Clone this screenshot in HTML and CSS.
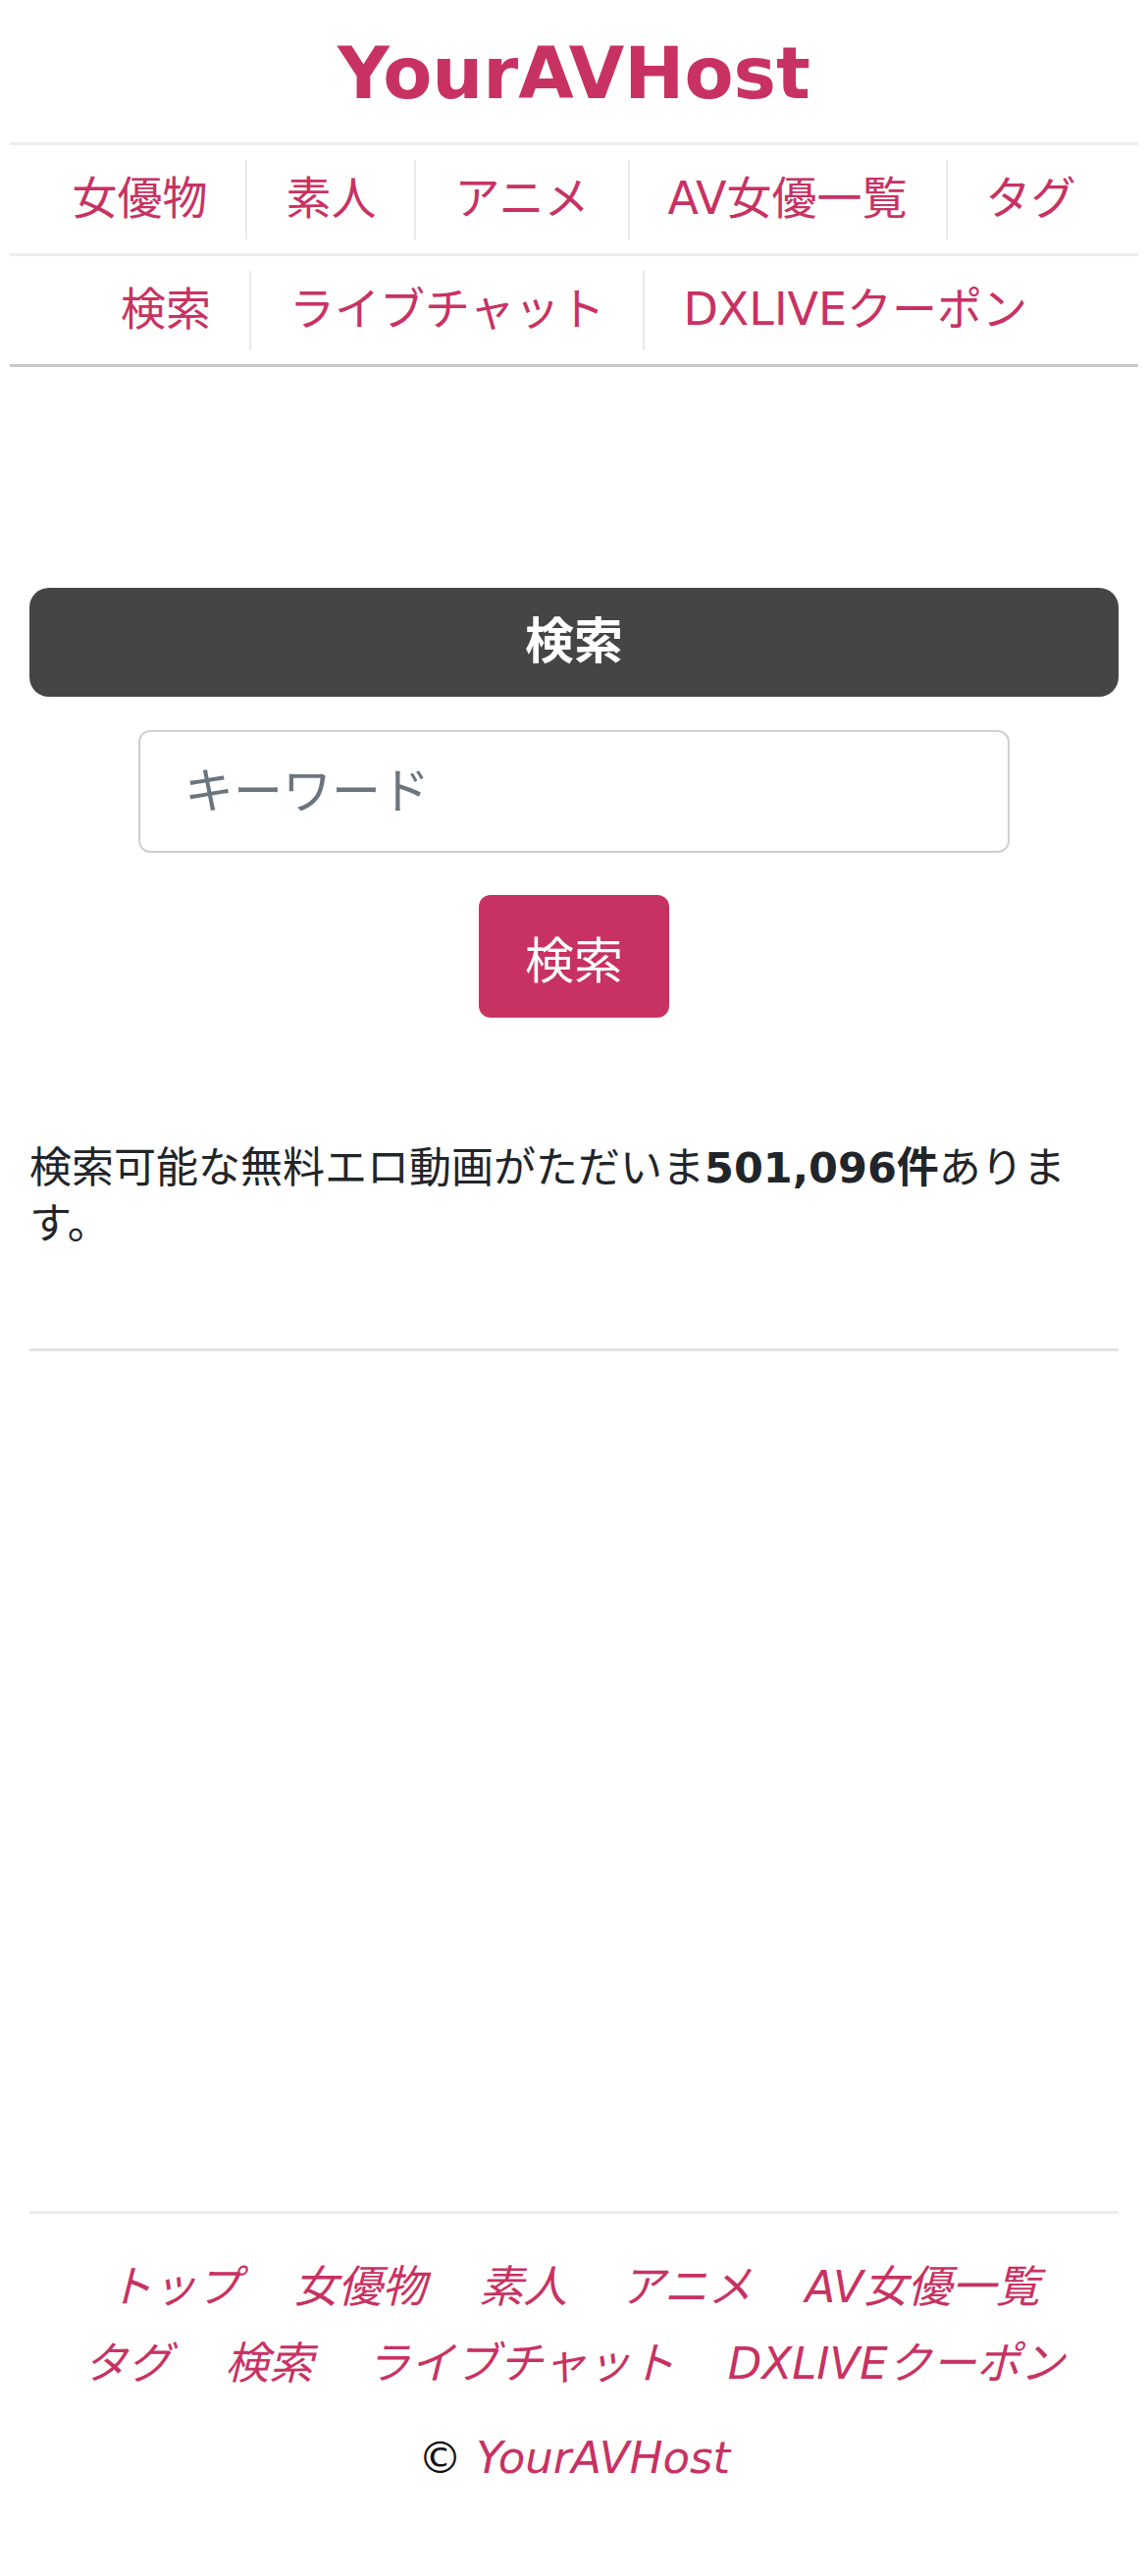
FILE: index.html
```
<!DOCTYPE html>
<html lang="ja">
  <head>
    <meta charset="UTF-8" />
    <title>検索 | YourAVHost</title>
    <link rel="stylesheet" href="styles.css">
  </head>
  <body>
    <header class="site-header">
      <h1 class="logo"><a href="#">YourAVHost</a></h1>
      <nav class="global-nav">
        <ul class="nav-row">
          <li><a href="#">女優物</a></li>
          <li><a href="#">素人</a></li>
          <li><a href="#">アニメ</a></li>
          <li><a href="#">AV女優一覧</a></li>
          <li><a href="#">タグ</a></li>
        </ul>
        <ul class="nav-row">
          <li><a href="#">検索</a></li>
          <li><a href="#">ライブチャット</a></li>
          <li><a href="#">DXLIVEクーポン</a></li>
        </ul>
      </nav>
    </header>

    <main class="content">
      <h2 class="section-title">検索</h2>
      <form class="search-form">
        <input class="search-input" type="text" placeholder="キーワード">
        <button class="search-btn" type="submit">検索</button>
      </form>
      <p class="count">検索可能な無料エロ動画がただいま<strong>501,096件</strong>あります。</p>
      <hr class="divider">
    </main>

    <footer class="site-footer">
      <ul class="footer-links">
        <li><a href="#">トップ</a></li>
        <li><a href="#">女優物</a></li>
        <li><a href="#">素人</a></li>
        <li><a href="#">アニメ</a></li>
        <li><a href="#">AV女優一覧</a></li>
        <li><a href="#">タグ</a></li>
        <li><a href="#">検索</a></li>
        <li><a href="#">ライブチャット</a></li>
        <li><a href="#">DXLIVEクーポン</a></li>
      </ul>
      <p class="copyright">© <a href="#">YourAVHost</a></p>
    </footer>
  </body>
</html>
```

FILE: styles.css
```
/* base */
html, body {
  margin: 0;
  padding: 0;
  background: #fff;
  color: #212529;
  font-family: "DejaVu Sans", "Noto Sans CJK JP", sans-serif;
  font-size: 43px;
}

a {
  color: #c83263;
  text-decoration: none;
}

ul {
  list-style: none;
  margin: 0;
  padding: 0;
}

/* header */
.site-header {
  padding: 0 10px;
}

.logo {
  margin: 33px 0 28px;
  font-size: 73px;
  line-height: 84px;
  text-align: center;
}

.global-nav {
  border-bottom: 3px solid #c8c8c8;
}

.nav-row {
  display: flex;
  justify-content: center;
  padding: 15px 0 14px;
  border-top: 3px solid #eee;
}

.nav-row li {
  height: 81px;
  line-height: 79px;
  padding: 0 39px;
  font-size: 46px;
  white-space: nowrap;
}

.nav-row li + li {
  border-left: 2px solid #e9e9e9;
}

/* main */
.content {
  padding: 225px 30px 0;
}

.section-title {
  margin: 0;
  height: 111px;
  line-height: 111px;
  background: #454545;
  color: #fff;
  border-radius: 20px;
  font-size: 50px;
  text-align: center;
}

.search-form {
  display: flex;
  flex-direction: column;
  align-items: center;
  gap: 43px;
  margin-top: 34px;
}

.search-input {
  box-sizing: border-box;
  width: 80%;
  height: 125px;
  padding: 0 45px;
  border: 2px solid #ced0d4;
  border-radius: 12px;
  font-family: inherit;
  font-size: 50px;
  color: #212529;
}

.search-input::placeholder {
  color: #6c757d;
}

.search-btn {
  height: 125px;
  padding: 0 47px;
  border: 0;
  border-radius: 12px;
  background: #c83263;
  color: #fff;
  font-family: inherit;
  font-size: 50px;
}

.count {
  margin: 125px 0 0;
  line-height: 57px;
}

.divider {
  margin: 98px 0 0;
  border: 0;
  border-top: 3px solid #e3e3e3;
}

/* footer */
.site-footer {
  margin: 876px 30px 0;
  padding: 36px 0 80px;
  border-top: 3px solid #ececec;
  text-align: center;
  font-size: 45px;
  font-style: italic;
}

.footer-links {
  display: flex;
  flex-wrap: wrap;
  justify-content: center;
}

.footer-links li {
  padding: 0 27px;
  line-height: 78px;
}

.copyright {
  margin: 18px 0 0;
  line-height: 78px;
  color: #111;
}
```
